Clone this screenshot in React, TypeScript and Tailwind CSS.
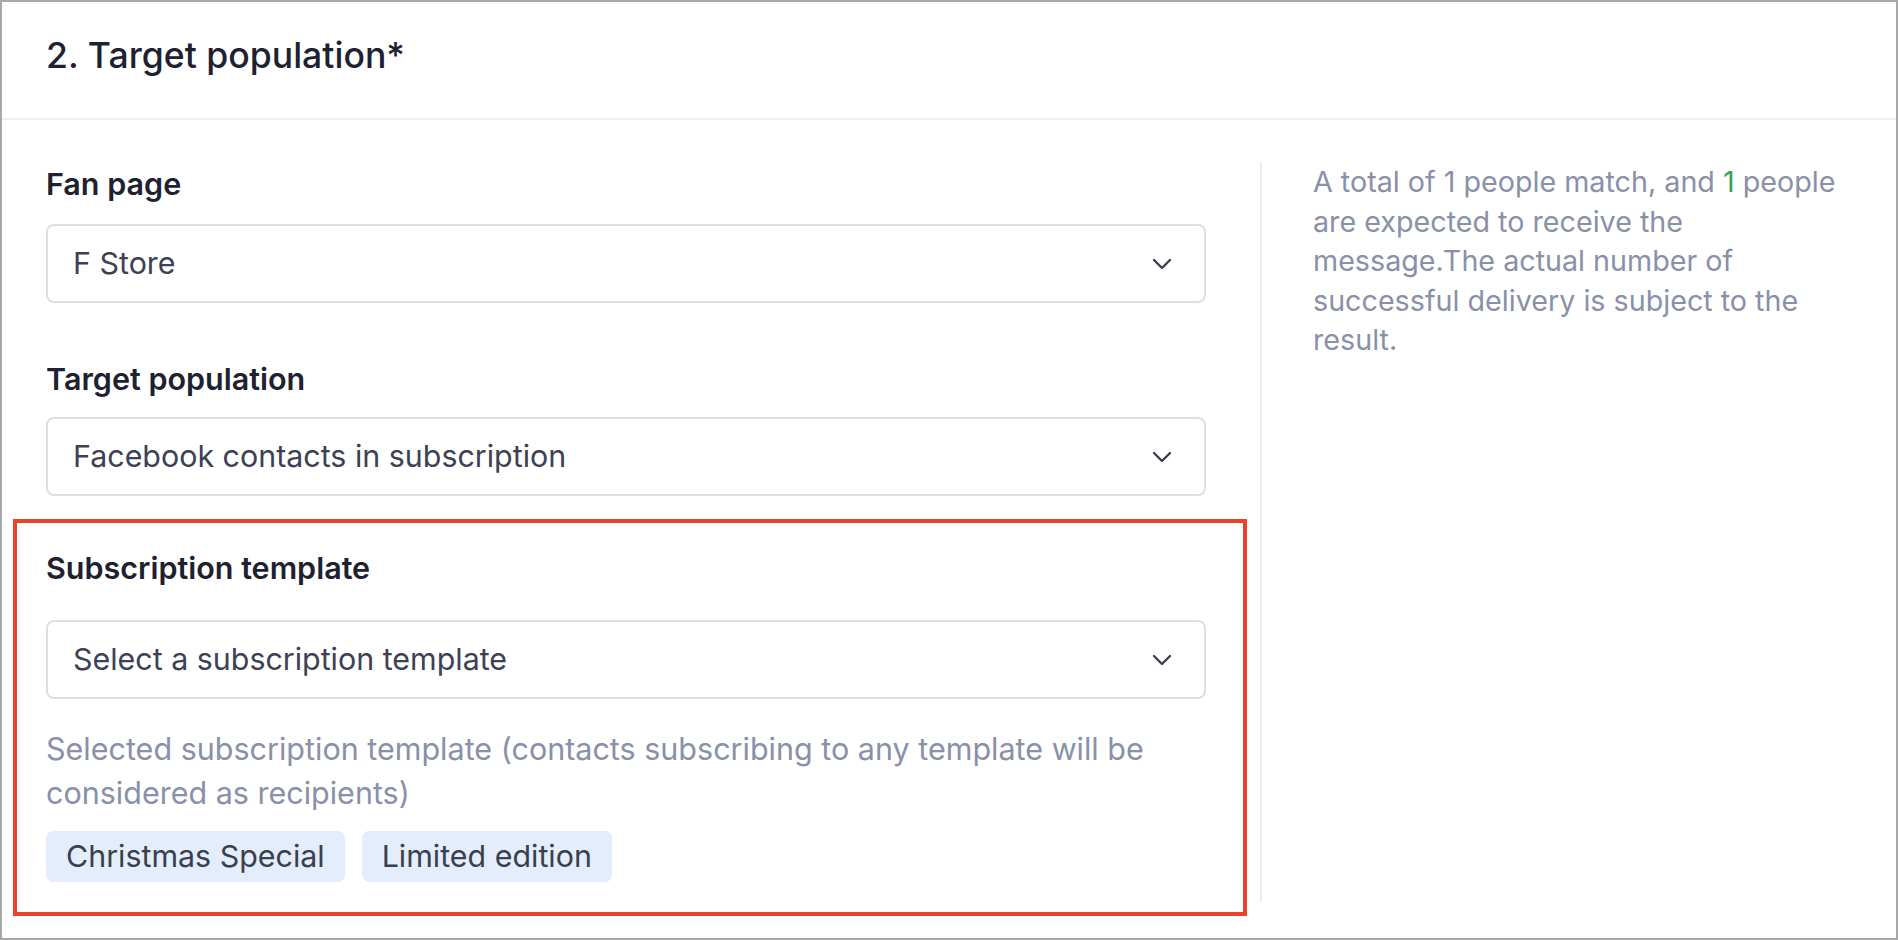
import React from 'react';

const Chevron = () => (
  <svg width="20" height="12" viewBox="0 0 20 12" fill="none">
    <polyline points="2,2 10,10 18,2" stroke="#3c404c" strokeWidth="2.4" strokeLinecap="round" strokeLinejoin="round" />
  </svg>
);

const SelectBox = ({ value }: { value: string }) => (
  <div className="h-[79px] w-full rounded-[8px] border-2 border-[#dcdfe8] bg-white pl-[25px] pr-[32px] flex items-center justify-between">
    <span className="text-[30.4px] text-[#3c4254]">{value}</span>
    <Chevron />
  </div>
);

const Field = ({ label, value, className = 'gap-[22px]' }: { label: string; value: string; className?: string }) => (
  <div className={`flex flex-col ${className}`}>
    <div className="text-[30.5px] leading-[36px] font-semibold text-[#1e2130]">{label}</div>
    <SelectBox value={value} />
  </div>
);

const templates = ['Christmas Special', 'Limited edition'];

const App = () => {
  return (
    <div
      className="w-[1898px] h-[940px] border-2 border-[#a8a8a8] bg-white flex flex-col overflow-hidden"
      style={{ fontFamily: 'Inter, "Noto Sans", sans-serif' }}
    >
      <div className="h-[118px] shrink-0 border-b-2 border-[#f0f0f0] flex items-center pl-[44px] pb-[8px]">
        <h2 className="text-[35.6px] font-medium text-[#1e2130]">2. Target population*</h2>
      </div>

      <div className="flex flex-1">
        <div className="w-[1258px] shrink-0 pl-[44px] pr-[54px] pt-[46px] flex flex-col">
          <Field label="Fan page" value="F Store" />
          <Field label="Target population" value="Facebook contacts in subscription" className="mt-[58px] gap-[20px]" />

          <div className="relative mt-[54px] flex flex-col">
            <div className="pointer-events-none absolute -left-[33px] -right-[41px] -top-[31px] -bottom-[34px] border-4 border-[#e9442b]" />
            <Field label="Subscription template" value="Select a subscription template" className="gap-[34px]" />
            <p className="mt-[28px] text-[30.5px] leading-[44px] text-[#8990a8]">
              Selected subscription template (contacts subscribing to any template will be considered as recipients)
            </p>
            <div className="mt-[16px] flex gap-[17px]">
              {templates.map((t) => (
                <span
                  key={t}
                  className="h-[51px] px-[20px] rounded-[7px] bg-[#e4edfc] text-[30.4px] text-[#3a3f4e] flex items-center"
                >
                  {t}
                </span>
              ))}
            </div>
          </div>
        </div>

        <div className="mt-[42px] h-[740px] flex-1 border-l-2 border-[#ececf1] pl-[51px]">
          <p className="w-[530px] text-[28.7px] leading-[39.6px] text-[#8990a8]">
            A total of 1 people match, and <span className="text-[#37a35a]">1</span> people are expected to receive the
            message.The actual number of successful delivery is subject to the result.
          </p>
        </div>
      </div>
    </div>
  );
};

export default App;
